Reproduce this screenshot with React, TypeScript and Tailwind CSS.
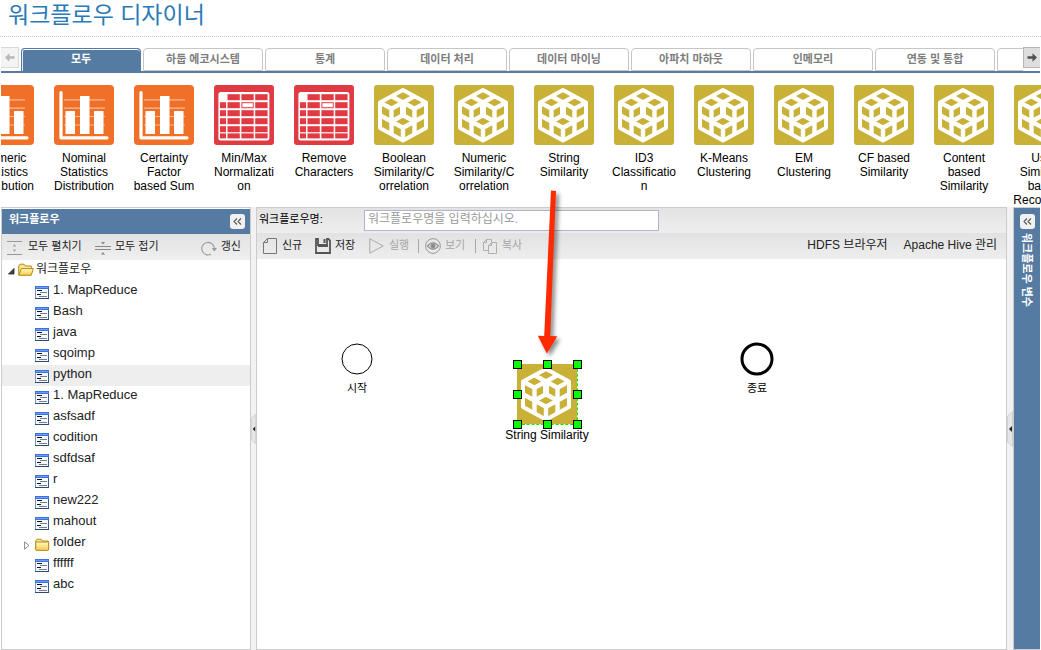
import React from "react";

const TABS = ["모두", "하둡 에코시스템", "통계", "데이터 처리", "데이터 마이닝", "아파치 마하웃", "인메모리", "연동 및 통합", ""];

type Kind = "chart" | "grid" | "cube";

const MODULES: { kind: Kind; lines: string[] }[] = [
  { kind: "chart", lines: ["Numeric", "Statistics", "Distribution"] },
  { kind: "chart", lines: ["Nominal", "Statistics", "Distribution"] },
  { kind: "chart", lines: ["Certainty", "Factor", "based Sum"] },
  { kind: "grid", lines: ["Min/Max", "Normalizati", "on"] },
  { kind: "grid", lines: ["Remove", "Characters"] },
  { kind: "cube", lines: ["Boolean", "Similarity/C", "orrelation"] },
  { kind: "cube", lines: ["Numeric", "Similarity/C", "orrelation"] },
  { kind: "cube", lines: ["String", "Similarity"] },
  { kind: "cube", lines: ["ID3", "Classificatio", "n"] },
  { kind: "cube", lines: ["K-Means", "Clustering"] },
  { kind: "cube", lines: ["EM", "Clustering"] },
  { kind: "cube", lines: ["CF based", "Similarity"] },
  { kind: "cube", lines: ["Content", "based", "Similarity"] },
  { kind: "cube", lines: ["User", "Similarity", "based", "Recommen"] },
];

const TREE = [
  "1. MapReduce", "Bash", "java", "sqoimp", "python", "1. MapReduce", "asfsadf", "codition",
  "sdfdsaf", "r", "new222", "mahout", "folder", "ffffff", "abc",
];

function CubeIcon({ rounded = true }: { rounded?: boolean }) {
  return (
    <svg width="60" height="60" viewBox="0 0 60 60" className="block shrink-0">
      <rect width="60" height="60" rx={rounded ? 3 : 0} fill="#c9b037" />
      <g fill="none" stroke="#fff" strokeLinejoin="round">
        <path d="M29 5L52 17.5V43L29 55.5L6 43V17.5Z" strokeWidth="4" />
        <path
          d="M17.5 11.25L40.5 23.75M40.5 11.25L17.5 23.75M6 17.5L17.5 23.75V49.25M52 17.5L40.5 23.75V49.25M17.5 36.5L29 30.25L40.5 36.5L29 42.75ZM6 30.25L17.5 36.5M52 30.25L40.5 36.5M29 42.75V55.5"
          strokeWidth="4.4"
        />
        <path d="M29 17.5V30.25" strokeWidth="6" />
      </g>
    </svg>
  );
}

function ChartIcon() {
  return (
    <svg width="60" height="60" viewBox="0 0 60 60" className="block shrink-0">
      <rect width="60" height="60" rx="4" fill="#f07028" />
      <path d="M10 14.8H51M10 23.2H51M10 31.5H51M10 40H51" stroke="#fff" strokeOpacity="0.5" strokeWidth="1.2" />
      <path d="M7 7.5V52.8H53" fill="none" stroke="#fff" strokeWidth="3.2" strokeLinecap="round" strokeLinejoin="round" />
      <path d="M11.5 26H21V49H11.5ZM26 11H35.5V49H26ZM40 26H49.5V49H40Z" fill="#fff" />
    </svg>
  );
}

const GRID_COLS = [[6, 6], [13.5, 12.3], [27.4, 12.3], [41.2, 12.4]];
const GRID_ROWS = [9.2, 17.2, 25.2, 33.2, 41.2, 48.4];

function GridIcon() {
  return (
    <svg width="60" height="60" viewBox="0 0 60 60" className="block shrink-0">
      <rect width="60" height="60" rx="3" fill="#e03b42" />
      <rect x="4.4" y="7" width="51" height="48.6" rx="2.5" fill="#fff" />
      {GRID_ROWS.map((y, r) =>
        GRID_COLS.map(([x, w], c) =>
          r === 0 && c === 0 ? null : <rect key={`${r}-${c}`} x={x} y={y} width={w} height={r === 5 ? 5 : 6} fill="#e03b42" />
        )
      )}
      <rect x="28.4" y="18.2" width="10.4" height="4" fill="#fff" />
    </svg>
  );
}

function ModuleIcon({ kind }: { kind: Kind }) {
  if (kind === "chart") return <ChartIcon />;
  if (kind === "grid") return <GridIcon />;
  return <CubeIcon />;
}

function DocIcon() {
  return (
    <svg width="14" height="13" viewBox="0 0 14 13" className="block shrink-0" shapeRendering="crispEdges">
      <rect width="14" height="13" fill="#7d96bd" />
      <rect x="13" width="1" height="13" fill="#3d5a88" />
      <rect y="12" width="14" height="1" fill="#2f4a75" />
      <rect x="1" y="3" width="12" height="9" fill="#f4f8ff" />
      <rect width="14" height="3" fill="#3b72e0" />
      <rect x="1" y="1" width="12" height="1" fill="#6e9bf5" />
      <path d="M2 4.5H7M2 8.5H6" stroke="#111" />
      <path d="M5 6.5H12M4 10.5H12" stroke="#777f8c" />
    </svg>
  );
}

function FolderIcon({ open = false }: { open?: boolean }) {
  return (
    <svg width="16" height="14" viewBox="0 0 16 14" className="block shrink-0">
      <defs>
        <linearGradient id="folderFill" x1="0" y1="0" x2="0" y2="1">
          <stop offset="0" stopColor="#fffbc4" />
          <stop offset="1" stopColor="#f5c94c" />
        </linearGradient>
      </defs>
      <path d="M.7 11.5V3L2 1.2H6L7.4 3H13.3V11.5Z" fill="#fae68b" stroke="#b8891e" />
      {open ? (
        <path d="M.7 12.3L3.3 5.6H15.4L13.2 12.3Z" fill="url(#folderFill)" stroke="#b8891e" strokeLinejoin="round" />
      ) : (
        <rect x=".7" y="4" width="13" height="8.4" rx="1" fill="url(#folderFill)" stroke="#b8891e" />
      )}
    </svg>
  );
}

function CollapseButton({ label }: { label: string }) {
  return (
    <button aria-label={label} className="flex h-[15px] w-[15px] shrink-0 items-center justify-center rounded-[3px] bg-[#f1f1f1]">
      <svg width="9" height="9" viewBox="0 0 9 9" fill="none" stroke="#555" strokeWidth="1.1">
        <path d="M4 1.5L1 4.5L4 7.5M8 1.5L5 4.5L8 7.5" />
      </svg>
    </button>
  );
}

function Splitter() {
  return (
    <div className="flex items-start bg-[#f2f2f2] pt-[204px]">
      <svg width="6" height="36" viewBox="0 0 6 36" className="block">
        <path d="M5.5 .5L.5 5V31L5.5 35.5Z" fill="#e6e6e6" stroke="#cfcfcf" />
        <path d="M5 15V21L2 18Z" fill="#222" />
      </svg>
    </div>
  );
}

const HANDLES = [
  "-left-1 -top-1", "left-[26px] -top-1", "left-14 -top-1",
  "-left-1 top-[26px]", "left-14 top-[26px]",
  "-left-1 top-14", "left-[26px] top-14", "left-14 top-14",
];

export default function App() {
  return (
    <div className="relative flex min-h-screen flex-col overflow-hidden bg-white font-['Liberation_Sans','Noto_Sans_CJK_KR',sans-serif] text-[12px] text-black">
      <header className="flex h-[37px] items-start border-b border-dotted border-[#cccccc] px-2">
        <h1 className="text-[23px] leading-[30px] text-[#2a7ab8]">워크플로우 디자이너</h1>
      </header>

      <nav className="mx-px mt-[10px] flex h-[26px] items-start border-b-2 border-[#567ba2]">
        <button aria-label="이전 탭" className="mr-[2px] flex h-[21px] w-[18px] shrink-0 items-center justify-center border border-l-0 border-[#d8d8d8] bg-[#f4f4f4]">
          <svg width="10" height="9" viewBox="0 0 10 9" fill="#b8b8b8"><path d="M0 4.5L4.5 .3V3.2H9.5V5.8H4.5V8.7Z" /></svg>
        </button>
        <div className="flex min-w-0 flex-1 gap-[2px] self-stretch overflow-hidden pt-px">
          {TABS.map((tab, i) =>
            i === 0 ? (
              <button key={i} className="w-[120px] shrink-0 rounded-t-[4px] border border-b-0 border-[#567ba2] bg-[#567ba2] pb-px text-[11px] font-bold text-white shadow-[inset_0_1px_0_#ffffff,inset_1px_0_0_#e4ebf2]">
                {tab}
              </button>
            ) : (
              <button key={i} aria-label={tab || "더보기"} className="w-[120px] shrink-0 rounded-t-[4px] border border-[#c6c6c6] bg-white text-[11px] font-bold text-[#7d7d7d]">
                {tab}
              </button>
            )
          )}
        </div>
        <button aria-label="다음 탭" className="flex h-[21px] w-[17px] shrink-0 items-center justify-center border border-r-0 border-[#b5b5b5] bg-[#dedede]">
          <svg width="10" height="9" viewBox="0 0 10 9" fill="#505050"><path d="M10 4.5L5.5 .3V3.2H.5V5.8H5.5V8.7Z" /></svg>
        </button>
      </nav>

      <div className="h-[134px] overflow-hidden pl-px">
        <div className="overflow-hidden">
          <ul className="-ml-[37px] flex pt-3">
            {MODULES.map((m, i) => (
              <li key={i} className="flex w-20 shrink-0 flex-col items-center">
                <ModuleIcon kind={m.kind} />
                <span className="mt-[6px] whitespace-pre text-center leading-[14px]">{m.lines.join("\n")}</span>
              </li>
            ))}
          </ul>
        </div>
      </div>

      <main className="grid flex-1 grid-cols-[250px_5px_1fr_6px_27px] px-px">
        <aside className="flex flex-col border border-[#cccccc]">
          <div className="mt-px flex h-[25px] items-center justify-between bg-[#567ba2] pl-[7px] pr-[5px]">
            <h2 className="pb-[4px] text-[11px] font-bold text-white">워크플로우</h2>
            <CollapseButton label="접기" />
          </div>
          <div className="flex h-[26px] items-center bg-linear-to-b from-[#e3e3e3] to-[#efefef] pl-[5px] pr-[9px] text-[11px] text-[#222222]">
            <button className="flex w-[88px] items-center gap-[6px]">
              <svg width="15" height="15" viewBox="0 0 15 15" className="mt-[3px]" fill="none" stroke="#999">
                <path d="M0 .5H15M0 13.5H15" /><path d="M7.5 3L9 5.5H6ZM7.5 11L9 8.5H6Z" fill="#999" stroke="none" />
              </svg>
              <span className="pb-[2px]">모두 펼치기</span>
            </button>
            <button className="flex items-center gap-1">
              <svg width="16" height="15" viewBox="0 0 16 15" className="mt-[3px]" fill="none" stroke="#888">
                <path d="M0 5.5H16M0 8.5H16" /><path d="M8 3.5L10 1H6ZM8 11L10 13.5H6Z" fill="#888" stroke="none" />
              </svg>
              <span className="pb-[2px]">모두 접기</span>
            </button>
            <button className="ml-auto flex items-center gap-1">
              <svg width="16" height="15" viewBox="0 0 16 15" className="mt-[3px]" fill="none" stroke="#999" strokeWidth="1.1">
                <path d="M10 13.3A6.3 6.3 0 1 1 13.4 8" /><path d="M10.8 7H16L13.4 10.4Z" fill="#999" stroke="none" />
              </svg>
              <span className="pb-[2px]">갱신</span>
            </button>
          </div>
          <ul className="text-[13px] text-[#222222]">
            <li>
              <button className="flex h-[21px] w-full items-center pl-[6px] text-left">
                <svg width="7" height="7" viewBox="0 0 7 7" className="mt-[2px] shrink-0"><path d="M6 .5V6H.5Z" fill="#444" stroke="#222" strokeWidth=".8" /></svg>
                <span className="ml-[3px] mr-[2px] pb-px"><FolderIcon open /></span>
                <span className="pb-[3px] text-[12px]">워크플로우</span>
              </button>
            </li>
            {TREE.map((name, i) => (
              <li key={i} className={name === "python" ? "bg-[#eeeeee]" : ""}>
                <button className="flex h-[21px] w-full items-center text-left">
                  <span className="flex w-[33px] justify-end pr-[5px] pt-1">
                    {name === "folder" && (
                      <svg width="6" height="9" viewBox="0 0 6 9"><path d="M.6 .8V8.2L5 4.5Z" fill="#fff" stroke="#888" /></svg>
                    )}
                  </span>
                  <span className="w-[18px] shrink-0 pt-[2px]">{name === "folder" ? <FolderIcon /> : <DocIcon />}</span>
                  <span className="pb-[3px] leading-4">{name}</span>
                </button>
              </li>
            ))}
          </ul>
        </aside>

        <Splitter />

        <section className="flex min-w-0 flex-col border border-[#cccccc]">
          <div className="flex h-[25px] items-center bg-linear-to-b from-[#e3e3e3] to-[#eeeeee] pl-[2px]">
            <label htmlFor="workflow-name" className="w-[105px] shrink-0 pb-[3px] text-[11px]">워크플로우명:</label>
            <input
              id="workflow-name"
              placeholder="워크플로우명을 입력하십시오."
              className="h-[21px] w-[295px] border border-[#b0b4ca] bg-white px-[3px] pb-[3px] text-[12px] outline-none placeholder:text-[#999999]"
            />
          </div>
          <div className="flex h-[26px] items-center bg-linear-to-b from-[#e2e2e2] to-[#eeeeee] pl-[6px] pr-[9px] text-[11px] text-[#222222]">
            <button className="flex w-[52px] items-center gap-[5px]">
              <svg width="14" height="16" viewBox="0 0 14 16" fill="none" stroke="#777"><path d="M4.5 .5H13.5V15.5H.5V4.5ZM4.5 .5V4.5H.5" /></svg>
              <span className="pb-[2px]">신규</span>
            </button>
            <button className="flex w-[54px] items-center gap-1">
              <svg width="16" height="16" viewBox="0 0 16 16"><path d="M1 1H3V7H12V1H13.5L15 2.5V15H1Z" fill="none" stroke="#555" strokeWidth="1.8" /><path d="M3 7H13V9H3ZM8.5 1H10.5V5H8.5Z" fill="#555" /></svg>
              <span className="pb-[2px]">저장</span>
            </button>
            <button disabled className="flex w-[49px] items-center gap-[5px] text-[#a6a6a6]">
              <svg width="15" height="16" viewBox="0 0 15 16" fill="none" stroke="#aaa"><path d="M.8 .8V15.2L14.2 8Z" /></svg>
              <span className="pb-[2px]">실행</span>
            </button>
            <span className="mr-[6px] h-[14px] w-px bg-[#aaa89a]" />
            <button disabled className="flex w-[50px] items-center gap-1 text-[#a6a6a6]">
              <svg width="16" height="16" viewBox="0 0 16 16" fill="none" stroke="#999"><circle cx="8" cy="8" r="7.4" /><path d="M2.5 8Q8 1.5 13.5 8Q8 14.5 2.5 8Z" strokeWidth="1.4" /><circle cx="8" cy="8" r="2.2" fill="#888" /></svg>
              <span className="pb-[2px]">보기</span>
            </button>
            <span className="mr-[7px] h-[14px] w-px bg-[#aaa89a]" />
            <button disabled className="flex items-center gap-[5px] text-[#a6a6a6]">
              <svg width="14" height="16" viewBox="0 0 14 16" fill="none" stroke="#b0b0b0"><path d="M5.5 12.5H.5V4.5L3.5 1.5H8.5V4.5M3.5 1.5V4.5H.5M8.5 4.5H13.5V15.5H5.5V7.5ZM8.5 4.5V7.5H5.5" /></svg>
              <span className="pb-[2px]">복사</span>
            </button>
            <div className="ml-auto flex gap-4 pb-[3px] text-[12px]">
              <button>HDFS 브라우저</button>
              <button>Apache Hive 관리</button>
            </div>
          </div>
          <div className="relative flex-1 bg-white">
            <div className="absolute left-[84px] top-[84px] flex w-8 flex-col items-center text-[11px]">
              <svg width="32" height="32" viewBox="0 0 32 32"><circle cx="16" cy="16" r="15" fill="#fff" stroke="#000" /></svg>
              <span className="mt-[5px]">시작</span>
            </div>
            <div className="absolute left-[483px] top-[83px] flex w-[34px] flex-col items-center text-[11px]">
              <svg width="34" height="34" viewBox="0 0 34 34"><circle cx="17" cy="17" r="15" fill="#fff" stroke="#000" strokeWidth="3" /></svg>
              <span className="mt-1">종료</span>
            </div>
            <div className="absolute left-[260px] top-[105px] h-[60px] w-[60px]">
              <CubeIcon rounded={false} />
              <div className="absolute -right-px -bottom-px left-0 top-0 border-r border-b border-dashed border-[#00ee00]" />
              {HANDLES.map((pos) => (
                <span key={pos} className={`absolute h-[9px] w-[9px] border border-black bg-[#00ff00] ${pos}`} />
              ))}
              <span className="absolute left-1/2 top-16 -translate-x-1/2 whitespace-nowrap leading-[14px]">String Similarity</span>
            </div>
          </div>
        </section>

        <Splitter />

        <aside className="flex flex-col items-center border border-r-0 border-[#cccccc] bg-[#567ba2] pt-[6px]">
          <CollapseButton label="펼치기" />
          <h2 className="mt-[4px] text-[11px] leading-[14px] font-bold text-white [text-orientation:sideways] [writing-mode:vertical-rl]">워크플로우 변수</h2>
        </aside>
      </main>

      <svg width="40" height="176" viewBox="0 0 40 176" className="pointer-events-none absolute left-[532px] top-[186px] drop-shadow-[3px_3px_2px_rgba(0,0,0,0.45)]">
        <path d="M19 4.5L24 5L18.2 150L25.2 150.3L14.8 167.5L5.8 149.8L12.2 149.9Z" fill="#ff2a00" />
      </svg>
    </div>
  );
}
